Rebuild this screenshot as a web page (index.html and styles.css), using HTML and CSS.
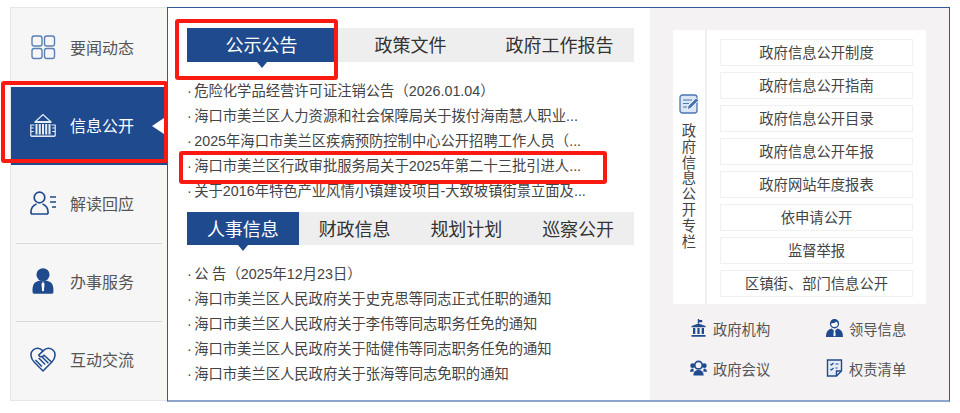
FILE: index.html
```html
<!DOCTYPE html>
<html>
  <head>
    <meta charset="utf-8" />
    <link rel="stylesheet" href="styles.css">
  </head>

  <body>
    <div id="wrapper">
      <ul class="nav">
        <li class="nav-item">
          <svg class="nav-icon" viewBox="0 0 26 26" fill="none" stroke="#5b80b4" stroke-width="1.400">
            <rect x="2" y="2" width="10" height="10" rx="2.200" />
            <rect x="14.500" y="2" width="10" height="10" rx="2.200" />
            <rect x="2" y="14.500" width="10" height="10" rx="2.200" />
            <rect x="14.500" y="14.500" width="10" height="10" rx="2.200" />
          </svg>
          要闻动态
        </li>
        <li class="nav-item active">
          <svg class="nav-icon" viewBox="0 0 26 26" fill="none" stroke="#e6edf6" stroke-width="1.200">
            <path d="M5.500 9.500 13 2.500l7.500 7z" />
            <path d="M4.500 10.500h17M.8 24V13h3.700M25.200 24V13h-3.700M.8 16h3M.8 19.500h3M22.200 16h3M22.200 19.500h3" />
            <path d="M6.500 12v10.500M9.800 12v10.500M13 12v10.500M16.200 12v10.500M19.500 12v10.500" stroke-width="2" />
            <path d="M.8 24.200h24.400" stroke-width="1.500" />
          </svg>
          信息公开
        </li>
        <li class="nav-item">
          <svg class="nav-icon" viewBox="0 0 26 24" fill="none" stroke="#1f4a8e" stroke-width="1.700">
            <circle cx="9.500" cy="6.500" r="5.300" />
            <path d="M1 23v-2c0-5 3-7 5.500-8M18 23v-2c0-5-3-7-5.500-8M1 23h17" />
            <path d="M20 6h6M20 11h6M22 16h4" />
          </svg>
          解读回应
        </li>
        <li class="nav-item">
          <svg class="nav-icon" viewBox="0 0 22 27">
            <circle cx="11" cy="7" r="6.800" fill="#1f4a8e" />
            <path d="M.3 26c-1-9 2-12 7.700-13l3 1 3-1c5.700 1 8.700 4 7.700 13l-1.200.8H1.500z" fill="#1f4a8e" />
            <path d="M10 15h2l.5 2-.5 6-1 1.500-1-1.500-.5-6z" fill="#fff" />
          </svg>
          办事服务
        </li>
        <li class="nav-item">
          <svg class="nav-icon" viewBox="0 0 24 24" fill="none" stroke="#1f4a8e" stroke-width="1.400">
            <path d="M4 15C0 11 0 6 3 3.500c3-2.200 6-2 9 1 3-3 6-3.200 9-1 3 2.500 3 7.500-1 11.500l-8 8z" />
            <path d="M12 4.500 8 8.500c1 2 3 2 5 0l7 6.500M5 13l6 6M8 11l6 6M11 10l6 6" />
          </svg>
          互动交流
        </li>
      </ul>

      <div class="panel">
        <div class="middle">
          <div class="tabs">
            <span class="tab active">公示公告</span>
            <span class="tab">政策文件</span>
            <span class="tab">政府工作报告</span>
          </div>
          <ul class="news">
            <li>· 危险化学品经营许可证注销公告（2026.01.04）</li>
            <li>· 海口市美兰区人力资源和社会保障局关于拨付海南慧人职业...</li>
            <li>· 2025年海口市美兰区疾病预防控制中心公开招聘工作人员（...</li>
            <li>· 海口市美兰区行政审批服务局关于2025年第二十三批引进人...</li>
            <li>· 关于2016年特色产业风情小镇建设项目-大致坡镇街景立面及...</li>
          </ul>

          <div class="tabs tabs-four">
            <span class="tab active">人事信息</span>
            <span class="tab">财政信息</span>
            <span class="tab">规划计划</span>
            <span class="tab">巡察公开</span>
          </div>
          <ul class="news">
            <li>· 公&#8197;告（2025年12月23日）</li>
            <li>· 海口市美兰区人民政府关于史克思等同志正式任职的通知</li>
            <li>· 海口市美兰区人民政府关于李伟等同志职务任免的通知</li>
            <li>· 海口市美兰区人民政府关于陆健伟等同志职务任免的通知</li>
            <li>· 海口市美兰区人民政府关于张海等同志免职的通知</li>
          </ul>
        </div>

        <div class="side">
          <div class="column">
            <div class="column-title">
              <svg class="column-icon" viewBox="0 0 20 20">
                <rect x="1" y="1" width="17" height="18" rx="2.500" fill="#dbe5f3" stroke="#4a76b4" stroke-width="1.300" />
                <path d="M4 6h9M4 9.500h6M4 13h4" stroke="#4a76b4" stroke-width="1.200" />
                <path d="M8 16l1-4 8-8 3 2-8 8z" fill="#4a76b4" stroke="#fff" stroke-width=".8" />
              </svg>
              <span class="column-text">政府信息公开专栏</span>
            </div>
            <div class="column-links">
              <a class="column-link">政府信息公开制度</a>
              <a class="column-link">政府信息公开指南</a>
              <a class="column-link">政府信息公开目录</a>
              <a class="column-link">政府信息公开年报</a>
              <a class="column-link">政府网站年度报表</a>
              <a class="column-link">依申请公开</a>
              <a class="column-link">监督举报</a>
              <a class="column-link">区镇街、部门信息公开</a>
            </div>
          </div>

          <div class="quick">
            <a class="quick-link">
              <svg class="quick-icon" viewBox="0 0 16 18" fill="#1f4a8e">
                <path d="M7.300 0h1.400v1h3v2.200h-3V4.500H7.300z" />
                <path d="M1 7 8 4.500 15 7v1.300H1z" />
                <path d="M2.500 9h2.300v6H2.500zM6.900 9h2.200v6H6.900zM11.200 9h2.300v6h-2.300zM1 16h14v1.800H1z" />
              </svg>
              政府机构
            </a>
            <a class="quick-link">
              <svg class="quick-icon" viewBox="0 0 18 19">
                <circle cx="9" cy="5" r="4.200" fill="#fff" stroke="#1f4a8e" stroke-width="1.400" />
                <path d="M5 4.500c2 0 5-.5 6-2l2 2.500V2L10 .500 6 1z" fill="#1f4a8e" />
                <path d="M0 19c0-5.500 2-8 6-9l3 3 3-3c4 1 6 3.500 6 9z" fill="#1f4a8e" />
                <path d="M8.300 12.500h1.400l.5 5-1.200 1-1.200-1z" fill="#fff" />
              </svg>
              领导信息
            </a>
            <a class="quick-link">
              <svg class="quick-icon" viewBox="0 0 18 16" fill="#1f4a8e">
                <circle cx="9" cy="5" r="4" fill="none" stroke="#1f4a8e" stroke-width="1.800" />
                <circle cx="2.800" cy="5.500" r="2.500" />
                <circle cx="15.200" cy="5.500" r="2.500" />
                <path d="M0 12c0-2 1-3.500 3.500-3.500L4 12zM18 12c0-2-1-3.500-3.500-3.500L14 12z" />
                <path d="M3.500 16c0-4 2-6 5.500-6s5.500 2 5.500 6z" />
              </svg>
              政府会议
            </a>
            <a class="quick-link">
              <svg class="quick-icon" viewBox="0 0 16 18" fill="none" stroke="#1f4a8e" stroke-width="1.400">
                <path d="M1 1h14v11l-5 5H1z" fill="#e8eef7" />
                <path d="M10 17v-5h5" />
                <path d="M4 5l1 1 2-2M9 5h3M4 10l1 1 2-2M9 9h2" stroke-width="1.100" />
              </svg>
              权责清单
            </a>
          </div>
        </div>
      </div>

      <div class="mark mark-nav"></div>
      <div class="mark mark-tab"></div>
      <div class="mark mark-row"></div>
    </div>
  </body>
</html>
```

FILE: styles.css
```css
html,
body {
  margin: 0;
  padding: 0;
  background-color: #fff;
}

body {
  font-family: "Liberation Sans", "Noto Sans CJK SC", sans-serif;
  color: #444;
}

ul {
  list-style: none;
  margin: 0;
  padding: 0;
}

#wrapper {
  position: relative;
  display: flex;
  width: 960px;
  height: 413px;
  padding: 7px 10px 0;
  box-sizing: border-box;
}

.nav {
  width: 157px;
  height: 394px;
  box-sizing: border-box;
  padding: 1px 0;
  background-color: #f6f6f6;
  border: 1px solid #e6e6e6;
  border-right: none;
}

.nav-item {
  position: relative;
  display: flex;
  align-items: center;
  height: 78.2px;
  box-sizing: border-box;
  padding: 0 0 3px 19px;
  font-size: 16px;
  color: #555;
}

.nav-item:nth-child(3)::after,
.nav-item:nth-child(4)::after {
  content: "";
  position: absolute;
  left: 5px;
  right: 5px;
  bottom: 0;
  border-bottom: 1px solid #d8d8d8;
}

.nav-item.active {
  background-color: #1f4a8e;
  color: #fff;
}

.nav-item.active::before {
  content: "";
  position: absolute;
  right: 3px;
  top: 31px;
  border-top: 8px solid transparent;
  border-bottom: 8px solid transparent;
  border-right: 12px solid #fff;
}

.nav-icon {
  width: 26px;
  height: 26px;
  margin-right: 14px;
  flex: none;
}

.panel {
  display: flex;
  width: 783px;
  height: 395px;
  box-sizing: border-box;
  border: 1px solid #2f5a9a;
  border-bottom: 2px solid #8ea6cc;
}

.middle {
  width: 482px;
  padding: 20px 16px 0 19px;
  box-sizing: border-box;
  background-color: #fff;
}

.tabs {
  display: flex;
  height: 34px;
  background-color: #eee;
}

.tabs-four {
  height: 33px;
}

.tab {
  position: relative;
  flex: 1;
  line-height: 37px;
  text-align: center;
  font-size: 18px;
  color: #333;
}

.tab.active {
  background-color: #1f4a8e;
  color: #fff;
}

.tab.active::after {
  content: "";
  position: absolute;
  left: 50%;
  bottom: -6px;
  margin-left: -5px;
  border-left: 5px solid transparent;
  border-right: 5px solid transparent;
  border-top: 6px solid #1f4a8e;
}

.news {
  padding: 17px 0 8px;
  font-size: 14.3px;
  word-spacing: -1.5px;
  color: #444;
}

.news li {
  height: 25px;
  line-height: 25px;
  white-space: nowrap;
}

.side {
  flex: 1;
  padding: 22px 23px 0 23px;
  background-color: #f4f2f3;
}

.column {
  display: flex;
  height: 274px;
  background-color: #fff;
}

.column-title {
  display: flex;
  flex-direction: column;
  align-items: center;
  width: 34px;
  padding-top: 64px;
  box-sizing: border-box;
  border-right: 2px solid #efefef;
  flex: none;
}

.column-icon {
  width: 20px;
  height: 20px;
  margin-bottom: 10px;
}

.column-text {
  width: 16px;
  font-size: 14.3px;
  line-height: 15.8px;
  text-align: center;
  color: #444;
}

.column-links {
  display: flex;
  flex-direction: column;
  gap: 6px;
  padding: 9px 13px 0 13px;
  flex: 1;
}

.column-link {
  height: 27px;
  line-height: 27px;
  box-sizing: border-box;
  border: 1px solid #f0f0f0;
  text-align: center;
  font-size: 14.3px;
  color: #444;
}

.quick {
  display: grid;
  grid-template-columns: 136px 1fr;
  row-gap: 14px;
  padding: 11px 0 0 17px;
}

.quick-link {
  display: flex;
  align-items: center;
  height: 26px;
  font-size: 14.3px;
  color: #555;
}

.quick-icon {
  width: 17px;
  height: 18px;
  margin-right: 6px;
  flex: none;
}

.mark {
  position: absolute;
  box-sizing: border-box;
  border: 4px solid #fb1a12;
  border-radius: 3px;
}

.mark-nav {
  left: 1px;
  top: 81px;
  width: 167px;
  height: 82px;
}

.mark-tab {
  left: 175px;
  top: 19px;
  width: 163px;
  height: 61px;
}

.mark-row {
  left: 179px;
  top: 151px;
  width: 428px;
  height: 33px;
}
```
